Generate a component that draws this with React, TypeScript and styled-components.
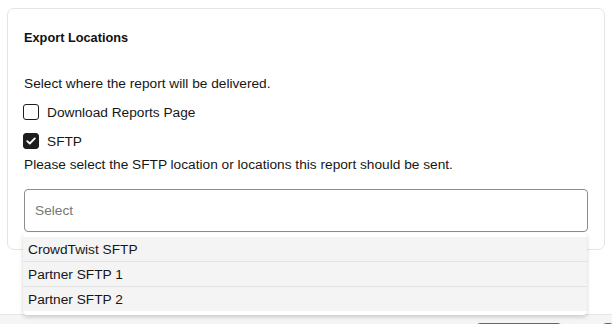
import React, { useState } from "react";
import styled, { createGlobalStyle } from "styled-components";

const GlobalStyle = createGlobalStyle`
  html, body {
    margin: 0;
    padding: 0;
    background: #ffffff;
    overflow: hidden;
  }
  body {
    font-family: "Liberation Sans", Arial, Helvetica, sans-serif;
    color: #1d1d1d;
  }
  * {
    box-sizing: border-box;
  }
`;

const locations = ["CrowdTwist SFTP", "Partner SFTP 1", "Partner SFTP 2"];

const Checkbox = ({ checked, label }: { checked: boolean; label: string }) => (
  <CheckRow>
    <Box $checked={checked}>
      {checked && (
        <svg width="10" height="8" viewBox="0 0 10 8">
          <path
            d="M1.2 4.1 L3.8 6.5 L8.8 1.4"
            fill="none"
            stroke="#fff"
            strokeWidth="1.8"
            strokeLinecap="round"
            strokeLinejoin="round"
          />
        </svg>
      )}
    </Box>
    <span>{label}</span>
  </CheckRow>
);

const App = () => {
  const [selected] = useState<string | null>(null);

  return (
    <Page>
      <GlobalStyle />
      <Main>
        <Card>
          <Title>Export Locations</Title>
          <Text $top={30}>Select where the report will be delivered.</Text>
          <Checks>
            <Checkbox checked={false} label="Download Reports Page" />
            <Checkbox checked label="SFTP" />
          </Checks>
          <Text $top={5}>Please select the SFTP location or locations this report should be sent.</Text>
          <SelectWrap>
            <SelectBox>{selected ?? <Placeholder>Select</Placeholder>}</SelectBox>
            <Menu>
              {locations.map((loc) => (
                <Option key={loc}>{loc}</Option>
              ))}
            </Menu>
          </SelectWrap>
        </Card>
      </Main>
      <Footer>
        <FooterButton />
        <FooterButton $narrow />
      </Footer>
    </Page>
  );
};

export default App;

const Page = styled.div`
  display: flex;
  flex-direction: column;
  height: 100vh;
  overflow: hidden;
`;

const Main = styled.div`
  height: 314px;
  flex-shrink: 0;
  padding: 8px 7px 0;
`;

const Card = styled.div`
  display: flex;
  flex-direction: column;
  border: 1px solid #e4e4e4;
  border-radius: 7px;
  padding: 21px 16px 17px;
  background: #fff;
`;

const Title = styled.h3`
  margin: 0;
  font-size: 12.75px;
  line-height: 16px;
  font-weight: 700;
  color: #111;
`;

const Text = styled.p<{ $top: number }>`
  margin: ${(p) => p.$top}px 0 0;
  font-size: 13.7px;
  line-height: 16px;
  color: #161616;
`;

const Checks = styled.div`
  display: flex;
  flex-direction: column;
  gap: 7px;
  margin-top: 9px;
`;

const CheckRow = styled.label`
  display: flex;
  align-items: center;
  gap: 8px;
  height: 22px;
  font-size: 13.7px;
  margin-left: -1px;
  color: #161616;
`;

const Box = styled.span<{ $checked: boolean }>`
  display: flex;
  align-items: center;
  justify-content: center;
  width: 16px;
  height: 16px;
  border-radius: 3px;
  border: 1.5px solid #1e1e1e;
  background: ${(p) => (p.$checked ? "#1e1e1e" : "#fff")};
`;

const SelectWrap = styled.div`
  position: relative;
  margin-top: 16px;
`;

const SelectBox = styled.div`
  display: flex;
  align-items: center;
  height: 43px;
  padding: 0 10px;
  border: 1px solid #8c8c8c;
  border-radius: 4px;
  font-size: 13.7px;
`;

const Placeholder = styled.span`
  color: #777;
`;

const Menu = styled.div`
  position: absolute;
  top: calc(100% + 1px);
  left: -1px;
  right: 1px;
  padding: 4px 0;
  background: #fff;
  border-radius: 4px;
  box-shadow: 0 2px 4px rgba(0, 0, 0, 0.18);
  z-index: 5;
`;

const Option = styled.div`
  height: 24px;
  display: flex;
  align-items: center;
  padding: 1px 5px 0;
  font-size: 13.7px;
  background: #f4f4f4;
  color: #161616;

  & + & {
    height: 25px;
    border-top: 1px solid #e2e2e2;
  }
`;

const Footer = styled.div`
  flex: 1;
  display: flex;
  justify-content: flex-end;
  gap: 40px;
  padding: 8px 0 0;
  background: #f5f5f5;
  border-top: 1px solid #e6e6e6;
  overflow: hidden;
`;

const FooterButton = styled.div<{ $narrow?: boolean }>`
  flex-shrink: 0;
  width: ${(p) => (p.$narrow ? "12px" : "86px")};
  height: 30px;
  border: 1px solid #666;
  border-radius: 4px;
  background: #fff;
  margin-right: ${(p) => (p.$narrow ? "-2px" : "0")};
`;
